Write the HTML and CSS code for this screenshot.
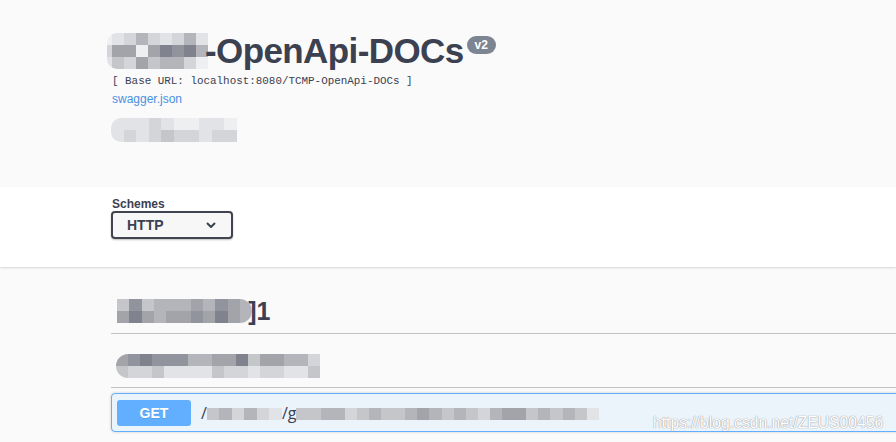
FILE: index.html
```html
<!DOCTYPE html>
<html lang="en">
  <head>
    <meta charset="UTF-8" />
    <link rel="stylesheet" href="styles.css">
    <title>OpenApi-DOCs</title>
  </head>
  <body>

  <!-- info block -->
  <div class="info">
    <div class="title-row">
      <div class="mosaic title-mosaic">
        <i class="s0"></i><i class="s1"></i><i class="s2"></i><i class="s4"></i><i class="s2"></i><i class="s1"></i><i class="s2"></i><i class="s4"></i><i class="s1"></i>
        <i class="s2"></i><i class="s5"></i><i class="s5"></i><i class="s0"></i><i class="s5"></i><i class="s7"></i><i class="s6"></i><i class="s7"></i><i class="s4"></i>
        <i class="s1"></i><i class="s3"></i><i class="s2"></i><i class="s5"></i><i class="s3"></i><i class="s4"></i><i class="s4"></i><i class="s2"></i><i class="s0"></i>
      </div>
      <h2 class="title">-OpenApi-DOCs</h2>
      <span class="version">v2</span>
    </div>
    <pre class="base-url">[ Base URL: localhost:8080/TCMP-OpenApi-DOCs ]</pre>
    <a class="spec-link" href="#">swagger.json</a>
    <div class="mosaic desc-mosaic">
      <i class="s1"></i><i class="s1"></i><i class="s1"></i><i class="s2"></i><i class="s1"></i><i class="s0"></i><i class="s0"></i><i class="s1"></i><i class="s1"></i><i class="s0"></i>
      <i class="s1"></i><i class="s2"></i><i class="s1"></i><i class="s2"></i><i class="s3"></i><i class="s2"></i><i class="s2"></i><i class="s1"></i><i class="s2"></i><i class="s2"></i>
    </div>
  </div>

  <!-- schemes -->
  <div class="scheme-container">
    <label class="schemes-label">Schemes</label>
    <div class="select">
      <span>HTTP</span>
      <svg width="10" height="6" viewBox="0 0 10 6"><path d="M1 1l4 4 4-4" fill="none" stroke="#3b4151" stroke-width="2"/></svg>
    </div>
  </div>

  <!-- operations -->
  <div class="ops">
    <div class="tag-heading">
      <div class="mosaic tag-mosaic">
        <i class="s3"></i><i class="s6"></i><i class="s3"></i><i class="s4"></i><i class="s4"></i><i class="s4"></i><i class="s5"></i><i class="s4"></i><i class="s6"></i><i class="s5"></i><i class="s4"></i>
        <i class="s5"></i><i class="s7"></i><i class="s5"></i><i class="s4"></i><i class="s5"></i><i class="s5"></i><i class="s6"></i><i class="s5"></i><i class="s7"></i><i class="s5"></i><i class="s4"></i>
      </div>
      <span class="tag-name">]1</span>
    </div>
    <div class="tag-desc">
      <div class="mosaic row-mosaic">
        <i class="s5"></i><i class="s6"></i><i class="s7"></i><i class="s6"></i><i class="s6"></i><i class="s6"></i><i class="s4"></i><i class="s4"></i><i class="s5"></i><i class="s5"></i><i class="s7"></i><i class="s3"></i><i class="s5"></i><i class="s5"></i><i class="s4"></i><i class="s4"></i><i class="s2"></i>
        <i class="s3"></i><i class="s2"></i><i class="s2"></i><i class="s3"></i><i class="s1"></i><i class="s1"></i><i class="s1"></i><i class="s1"></i><i class="s3"></i><i class="s2"></i><i class="s2"></i><i class="s1"></i><i class="s2"></i><i class="s2"></i><i class="s1"></i><i class="s1"></i><i class="s3"></i>
      </div>
    </div>

    <div class="opblock">
      <span class="method">GET</span>
      <span class="path">/</span>
      <div class="mosaic path-mosaic">
        <i class="s3"></i><i class="s4"></i><i class="s2"></i><i class="s4"></i><i class="s2"></i><i class="s1"></i>
      </div>
      <span class="path">/g</span>
      <div class="mosaic path-mosaic">
        <i class="s3"></i><i class="s3"></i><i class="s4"></i><i class="s4"></i><i class="s2"></i><i class="s3"></i><i class="s4"></i><i class="s3"></i><i class="s3"></i><i class="s4"></i><i class="s5"></i><i class="s4"></i><i class="s3"></i><i class="s4"></i><i class="s3"></i><i class="s2"></i><i class="s4"></i><i class="s5"></i><i class="s5"></i><i class="s3"></i><i class="s4"></i><i class="s3"></i><i class="s4"></i><i class="s3"></i><i class="s1"></i>
      </div>
    </div>
  </div>

  <div class="watermark">https://blog.csdn.net/ZEUS00456</div>
</body>
</html>
```

FILE: styles.css
```css
* {
  box-sizing: border-box;
}
html, body {
  margin: 0;
  padding: 0;
}
body {
  background-color: #fafafa;
  font-family: "Liberation Sans", Arial, sans-serif;
  color: #3b4151;
  width: 896px;
  height: 442px;
  overflow: hidden;
  position: relative;
}

/*===============================*/
/* mosaic (blurred out) blocks   */
/*===============================*/
.mosaic {
  display: grid;
  grid-auto-rows: 12px;
}
.mosaic i {
  display: block;
}
.s0 {background-color: #eeeff1;}
.s1 {background-color: #e2e3e6;}
.s2 {background-color: #d4d5d9;}
.s3 {background-color: #c4c6ca;}
.s4 {background-color: #b3b5ba;}
.s5 {background-color: #a2a4aa;}
.s6 {background-color: #91949d;}
.s7 {background-color: #80838d;}

/*===============================*/
/* info                          */
/*===============================*/
.info {
  height: 187px;
  padding: 33px 0 0 111px;
}
.title-row {
  display: flex;
  align-items: flex-start;
}
.title-mosaic {
  grid-template-columns: 5px repeat(8, 12px);
  border-radius: 10px 0 0 10px;
  overflow: hidden;
  margin-left: -4px;
}
.title {
  margin: 0;
  font-size: 35px;
  line-height: 36px;
  font-weight: bold;
  margin-left: -3px;
  letter-spacing: -0.6px;
}
.version {
  margin: 3px 0 0 3px;
  background-color: #7d8492;
  color: white;
  border-radius: 57px;
  font-size: 12px;
  font-weight: bold;
  line-height: 18px;
  padding: 0 8px;
}
.base-url {
  margin: 5px 0 0 1px;
  font-family: "Liberation Mono", monospace;
  font-size: 10.9px;
  line-height: 14px;
}
.spec-link {
  display: block;
  margin: 4px 0 0 1px;
  font-size: 12px;
  line-height: 14px;
  color: #4990e2;
  text-decoration: none;
}
.desc-mosaic {
  grid-template-columns: repeat(10, 12.6px);
  margin-top: 12px;
  border-radius: 10px 0 0 10px;
  overflow: hidden;
  width: 126px;
}

/*===============================*/
/* schemes                       */
/*===============================*/
.scheme-container {
  height: 80px;
  background-color: white;
  box-shadow: 0 1px 2px 0 rgba(0, 0, 0, 0.15);
  padding: 10px 0 0 111px;
  position: relative;
}
.schemes-label {
  display: block;
  font-size: 12px;
  font-weight: bold;
  line-height: 14px;
  margin-left: 1px;
}
.select {
  width: 122px;
  height: 28px;
  border: 2px solid #41444e;
  border-radius: 4px;
  background-color: #f7f7f7;
  box-shadow: 0 1px 2px 0 rgba(0, 0, 0, 0.25);
  display: flex;
  align-items: center;
  justify-content: space-between;
  padding: 0 15px 0 14px;
  font-size: 14px;
  font-weight: bold;
}

/*===============================*/
/* operations                    */
/*===============================*/
.ops {
  padding: 30px 0 0 111px;
}
.tag-heading {
  display: flex;
  align-items: center;
  height: 37px;
  border-bottom: 1px solid rgba(59, 65, 81, 0.3);
  padding: 0 0 8px 6px;
}
.tag-mosaic {
  grid-template-columns: repeat(11, 12.3px);
  border-radius: 0 12px 12px 0;
  overflow: hidden;
  position: relative;
  z-index: 1;
}
.tag-name {
  font-size: 25px;
  font-weight: bold;
  line-height: 28px;
  margin-left: -4px;
}
.tag-desc {
  height: 54px;
  border-bottom: 1px solid rgba(59, 65, 81, 0.3);
  padding: 20px 0 0 5px;
}
.row-mosaic {
  grid-template-columns: repeat(17, 12px);
  border-radius: 12px 0 0 12px;
  overflow: hidden;
  width: 204px;
}
.opblock {
  margin-top: 5px;
  width: 800px;
  height: 39px;
  border: 1px solid #61affe;
  border-radius: 4px;
  background-color: #ebf3fb;
  box-shadow: 0 0 3px rgba(0, 0, 0, 0.19);
  display: flex;
  align-items: center;
  padding: 0 5px;
}
.method {
  width: 74px;
  height: 26px;
  border-radius: 3px;
  background-color: #61affe;
  color: white;
  font-size: 14px;
  font-weight: bold;
  text-align: center;
  line-height: 26px;
  text-shadow: 0 1px 0 rgba(0, 0, 0, 0.1);
  margin-right: 10px;
}
.path {
  font-family: "Open Sans", sans-serif;
  font-size: 16px;
  color: #3b4151;
}
.path-mosaic {
  grid-auto-flow: column;
  grid-auto-columns: 12px;
  margin-top: 2px;
}
.path-mosaic:first-of-type {
  grid-auto-columns: 12.5px;
}
.path-mosaic:last-child {
  grid-auto-columns: 12.1px;
}

.watermark {
  position: absolute;
  left: 653px;
  top: 414px;
  font-size: 15.7px;
  color: white;
  text-shadow: 0 0 1px #9a9a9a, 0 0 1px #9a9a9a;
}
```
